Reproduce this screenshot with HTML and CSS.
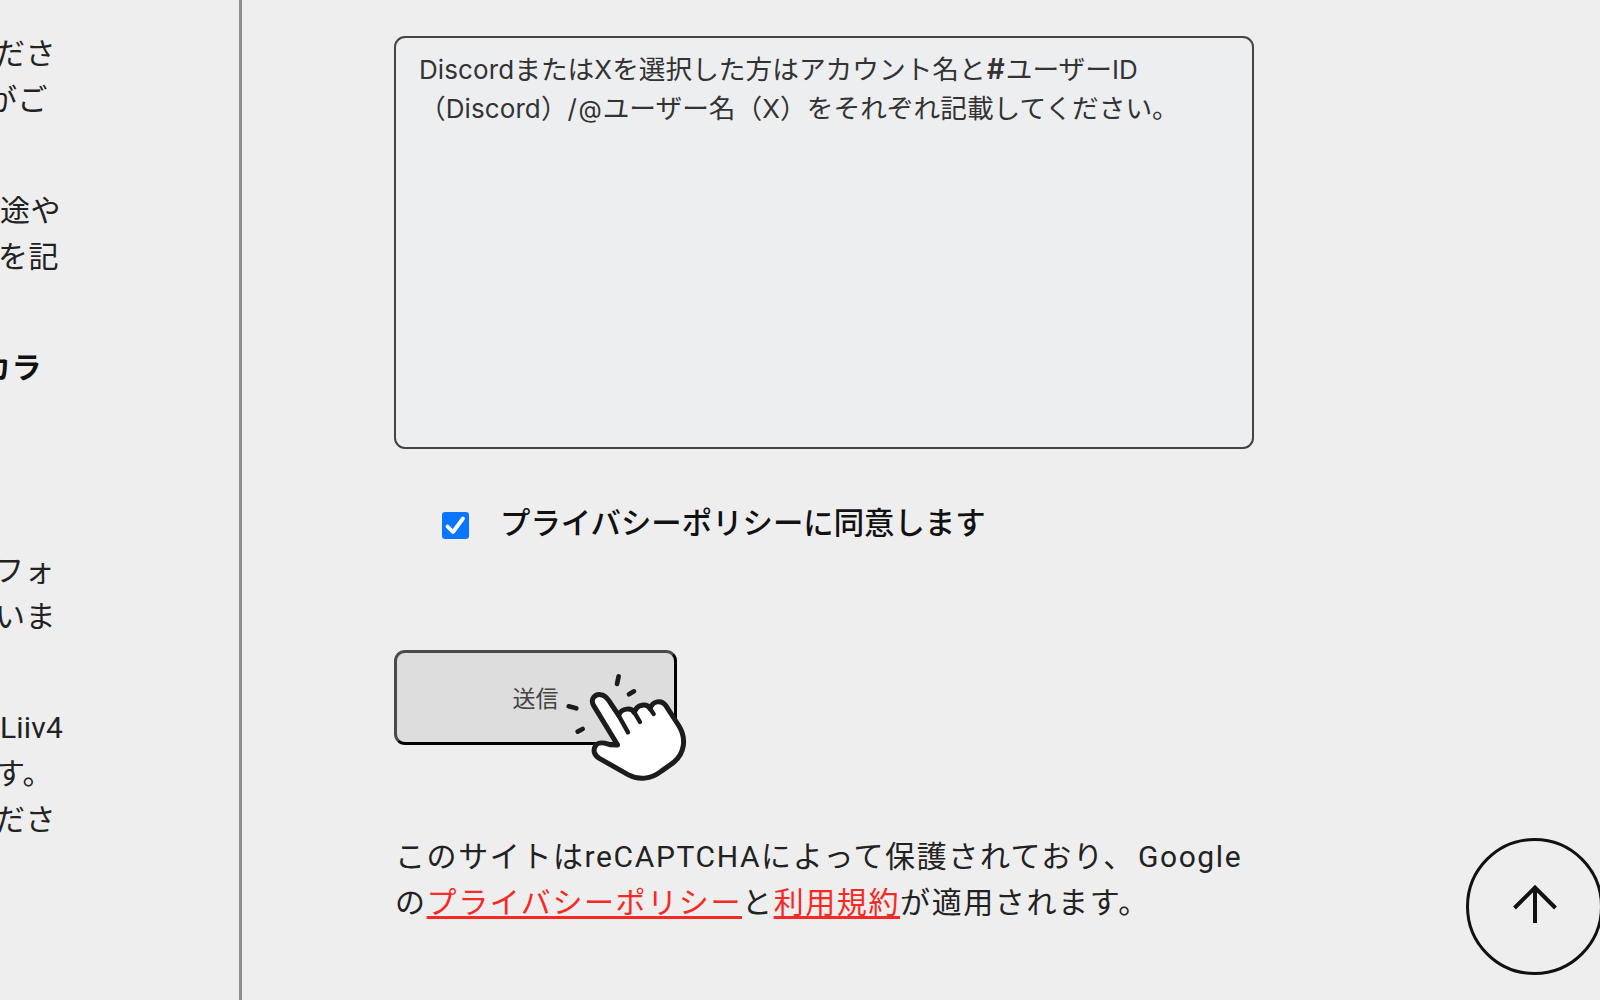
FILE: index.html
```html
<!DOCTYPE html>
<html lang="ja">
<head>
<meta charset="utf-8">
<title>お問い合わせ</title>
<link rel="stylesheet" href="styles.css">
</head>
<body>
<div class="page">
  <aside class="notes">
    <p class="note note-a"><span class="line out-half">ださ</span><span class="line out-far">がご</span></p>
    <p class="note note-b"><span class="line">途や</span><span class="line out-small">を記</span></p>
    <h2 class="note note-c"><span class="line out-bold">カラ</span></h2>
    <p class="note note-d"><span class="line out-kana">フォ</span><span class="line out-half">いま</span></p>
    <p class="note note-e"><span class="line"><span class="latin">Liiv4</span></span><span class="line out-half">す。</span><span class="line out-half">ださ</span></p>
  </aside>
  <main class="form">
    <div class="field"><span class="dm">Discord</span>または<span class="dm">X</span>を選択した方はアカウント名と<span class="hash">#</span>ユーザー<span class="dm">ID</span><br>（<span class="dm">Discord</span>）<span class="dm slash">/<span class="at">@</span></span>ユーザー名（<span class="dm">X</span>）をそれぞれ記載してください。</div>
    <div class="consent">
      <span class="check"><svg viewBox="0 0 27 27"><path d="M5.5 14.5 11 20 21 6.5"/></svg></span>
      <span class="consent-text">プライバシーポリシーに同意します</span>
    </div>
    <div class="submit">送信
      <svg class="hand" viewBox="0 0 480 450">
        <g class="rays"><path d="M236 79 231 102M267 133 282 124M86 169 109 175M113 245 128 237"/></g>
        <path class="shape" d="M233 285 161 167C149 145 167 132 182 134C193 135 200 142 206 151L236 196C245 172 276 173 283 188C290 160 322 160 330 176C338 152 365 149 377 166L417 228C440 266 434 310 400 338L363 364C333 388 296 391 264 374L178 325C161 315 158 299 168 285C180 272 199 281 209 284Z"/>
        <path class="fold" d="M236 197 264 247M283 187 300 216M329 175 341 192"/>
      </svg>
    </div>
    <p class="legal">このサイトは<span class="ro">reCAPTCHA</span>によって保護されており、<span class="ro google">Google</span><br>の<a class="link">プライバシーポリシー</a>と<a class="link">利用規約</a>が適用されます。</p>
  </main>
  <div class="totop"><svg viewBox="0 0 44 40"><path d="M22 39V3M1.5 24 22 3.500 42.500 24"/></svg></div>
</div>
</body>
</html>
```
FILE: styles.css
```css
* { box-sizing: border-box; }
body {
  margin: 0;
  background: #eee;
  color: #222;
  font-family: "Noto Sans CJK JP", sans-serif;
}
.page {
  position: relative;
  display: flex;
  width: 1600px;
  height: 1000px;
  overflow: hidden;
}
.notes {
  flex: none;
  width: 242px;
  border-right: 3px solid #8c8e8e;
  overflow: hidden;
  padding-top: 28px;
  font-size: 30px;
  line-height: 46px;
}
.note { margin: 0; font-size: 30px; font-weight: 400; letter-spacing: .5px; }
.note-b, .note-e { margin-top: 65px; }
.note-c { margin-top: 65px; font-weight: 700; color: #111; }
.note-d { margin-top: 157px; }
.line { display: block; white-space: nowrap; }
.out-half { margin-left: -5px; }
.out-kana { margin-left: -6px; }
.out-far { margin-left: -13px; }
.out-small { margin-left: -2px; }
.out-bold { margin-left: -19px; }
.latin { font-family: Roboto, sans-serif; letter-spacing: .2px; line-height: 0; }
.form { padding: 36px 0 0 152px; }
.field {
  width: 860px;
  height: 413px;
  padding: 11px 23px;
  border: 2px solid #444;
  border-radius: 11px;
  background: #edeef0;
  font-size: 26.700px;
  line-height: 38.500px;
  color: #333;
  white-space: nowrap;
}
.dm { font-family: Inter, sans-serif; font-size: 26px; letter-spacing: .1px; line-height: 0; }
.slash { letter-spacing: 1.500px; }
.at { font-size: 24px; letter-spacing: 1px; }
.hash { font-family: Inter, sans-serif; font-size: 28px; font-weight: 600; line-height: 0; padding: 0 1px; }
.consent {
  display: flex;
  align-items: center;
  margin-top: 49px;
  padding-left: 48px;
}
.check {
  width: 27px;
  height: 27px;
  margin-top: 9px;
  border-radius: 3px;
  background: #0a75ff;
}
.check svg { display: block; }
.check path { fill: none; stroke: #fff; stroke-width: 3.8; stroke-linecap: round; stroke-linejoin: round; }
.consent-text {
  margin-left: 31px;
  font-size: 30.400px;
  line-height: 46px;
  font-weight: 500;
  color: #111;
}
.submit {
  position: relative;
  width: 283px;
  height: 95px;
  margin-top: 106px;
  border: 3px solid;
  border-color: #4a4a4a #000 #000 #4a4a4a;
  border-radius: 11px;
  background: #ddd;
  font-size: 23px;
  line-height: 88px;
  text-align: center;
  color: #444;
}
.hand {
  position: absolute;
  left: 143px;
  top: -3px;
  width: 160px;
  height: 150px;
}
.hand path { stroke: #1c1c1c; stroke-width: 15; stroke-linecap: round; stroke-linejoin: round; fill: none; }
.hand .rays path { stroke-width: 14; }
.hand .shape { fill: #fff; }
.hand .fold { stroke-width: 13; }
.legal {
  margin: 87px 0 0 1px;
  font-size: 30px;
  line-height: 45.500px;
  letter-spacing: 1.600px;
  white-space: nowrap;
}
.ro { font-family: Roboto, sans-serif; line-height: 0; }
.google { margin-left: 3px; }
.link {
  color: #f52a26;
  text-decoration: underline;
  text-decoration-thickness: 3px;
  text-underline-offset: 3px;
  text-decoration-skip-ink: none;
}
.totop {
  position: absolute;
  left: 1466px;
  top: 838px;
  width: 137px;
  height: 137px;
  border: 3.500px solid #111;
  border-radius: 50%;
  display: flex;
  align-items: center;
  justify-content: center;
}
.totop svg { width: 44px; height: 40px; margin-bottom: 5px; }
.totop path { fill: none; stroke: #111; stroke-width: 4; }
```
